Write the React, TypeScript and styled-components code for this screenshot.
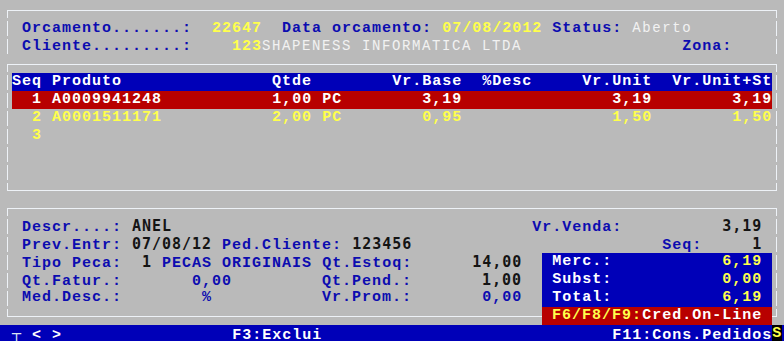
import React from 'react';
import styled, { createGlobalStyle, css } from 'styled-components';

type Tone = 'label' | 'hi' | 'white' | 'soft' | 'dark' | 'line';
type Item = [number, string, Tone];
type BoxSpec = { col: number; width: number; bg: string; items: Item[] };

const GRAY = '#bababa';
const BLUE = '#0000b8';
const RED = '#b80000';
const LINE = '#eef2f7';

const GlobalStyle = createGlobalStyle`
  html, body {
    margin: 0;
    background: ${GRAY};
  }
`;

const Screen = styled.div`
  position: relative;
  width: 784px;
  height: 341px;
  overflow: hidden;
  box-sizing: border-box;
  padding: 1px 0 0 2px;
  background: ${GRAY};
  font-family: 'Liberation Mono', monospace;
  font-size: 15px;
  font-weight: bold;
  letter-spacing: 1px;
  line-height: 18px;
`;

// moldura desenhada com caracteres de caixa: linha no meio da linha de texto
const Frame = styled.div<{ $closed?: boolean }>`
  position: relative;
  width: 780px;

  &::before,
  &::after {
    content: '';
    position: absolute;
    top: 9px;
    left: 5px;
    right: 5px;
    bottom: ${(p) => (p.$closed ? '8px' : '0')};
  }

  &::before {
    border-top: 1px solid ${LINE};
    border-bottom: ${(p) => (p.$closed ? `1px solid ${LINE}` : 'none')};
  }

  &::after {
    background-image: repeating-linear-gradient(
        to bottom,
        ${LINE} 0 8px,
        transparent 8px 11px,
        ${LINE} 11px 18px
      ),
      repeating-linear-gradient(
        to bottom,
        ${LINE} 0 8px,
        transparent 8px 11px,
        ${LINE} 11px 18px
      );
    background-size: 1px 100%;
    background-position: left top, right top;
    background-repeat: no-repeat;
  }
`;

const Row = styled.div`
  position: relative;
  height: 18px;
  white-space: pre;
`;

const StatusBar = styled(Row)`
  width: 784px;
  margin-left: -2px;
  padding-left: 2px;
  box-sizing: border-box;
  background: ${BLUE};
`;

const Block = styled.span<{ $bg: string; $cols: number }>`
  display: inline-block;
  vertical-align: top;
  height: 18px;
  width: ${(p) => p.$cols * 10}px;
  background: ${(p) => p.$bg};
`;

const tones = {
  label: css`
    color: #0c0cb0;
  `,
  hi: css`
    color: #ffff4c;
  `,
  white: css`
    color: #ffffff;
  `,
  soft: css`
    color: #f2f2f2;
    font-weight: normal;
    font-size: 14px;
    letter-spacing: 1.6px;
  `,
  dark: css`
    color: #141414;
    font-family: 'DejaVu Sans Mono', monospace;
    letter-spacing: 0.97px;
  `,
  line: css`
    color: #dce6f2;
    font-family: 'DejaVu Sans Mono', monospace;
    font-weight: normal;
    letter-spacing: 0.97px;
  `,
};

const Txt = styled.span<{ $tone: Tone }>`
  ${(p) => tones[p.$tone]}
`;

const Line = ({ items, from = 0 }: { items: Item[]; from?: number }) => {
  let cur = from;
  const out: React.ReactNode[] = [];
  items.forEach(([col, text, tone], i) => {
    if (col > cur) out.push(' '.repeat(col - cur));
    out.push(
      <Txt key={i} $tone={tone}>
        {text}
      </Txt>
    );
    cur = col + text.length;
  });
  return <>{out}</>;
};

const TermRow = ({ items = [], box }: { items?: Item[]; box?: BoxSpec }) => {
  const end = items.reduce((m, [c, t]) => Math.max(m, c + t.length), 0);
  return (
    <Row>
      <Line items={items} />
      {box && (
        <>
          {box.col > end ? ' '.repeat(box.col - end) : null}
          <Block $bg={box.bg} $cols={box.width}>
            <Line items={box.items} from={box.col} />
          </Block>
        </>
      )}
    </Row>
  );
};

const header: Item[] = [
  [2, 'Orcamento.......:', 'label'],
  [21, '22647', 'hi'],
  [28, 'Data orcamento:', 'label'],
  [44, '07/08/2012', 'hi'],
  [55, 'Status:', 'label'],
  [63, 'Aberto', 'soft'],
];

const client: Item[] = [
  [2, 'Cliente.........:', 'label'],
  [23, '123', 'hi'],
  [26, 'SHAPENESS INFORMATICA LTDA', 'soft'],
  [68, 'Zona:', 'label'],
];

const columns: Item[] = [
  [1, 'Seq', 'white'],
  [5, 'Produto', 'white'],
  [27, 'Qtde', 'white'],
  [39, 'Vr.Base', 'white'],
  [48, '%Desc', 'white'],
  [58, 'Vr.Unit', 'white'],
  [67, 'Vr.Unit+St', 'white'],
];

const items = [
  { seq: '1', cod: 'A0009941248', qt: '1,00', base: '3,19', unit: '3,19', st: '3,19' },
  { seq: '2', cod: 'A0001511171', qt: '2,00', base: '0,95', unit: '1,50', st: '1,50' },
];

const itemLine = (it: (typeof items)[number], tone: Tone): Item[] => [
  [3, it.seq, tone],
  [5, it.cod, tone],
  [27, it.qt, tone],
  [32, 'PC', tone],
  [42, it.base, tone],
  [61, it.unit, tone],
  [73, it.st, tone],
];

const totalsBox = (label: string, value: string): BoxSpec => ({
  col: 54,
  width: 23,
  bg: BLUE,
  items: [
    [55, label, 'white'],
    [72, value, 'hi'],
  ],
});

const App = () => (
  <>
    <GlobalStyle />
    <Screen>
      <Frame>
        <Row />
        <TermRow items={header} />
        <TermRow items={client} />
      </Frame>

      <Frame $closed>
        <Row />
        <TermRow box={{ col: 1, width: 76, bg: BLUE, items: columns }} />
        <TermRow box={{ col: 1, width: 76, bg: RED, items: itemLine(items[0], 'white') }} />
        <TermRow items={itemLine(items[1], 'hi')} />
        <TermRow items={[[3, '3', 'hi']]} />
        <Row />
        <Row />
        <Row />
      </Frame>

      <Frame $closed>
        <Row />
        <TermRow
          items={[
            [2, 'Descr....:', 'label'],
            [13, 'ANEL', 'dark'],
            [53, 'Vr.Venda:', 'label'],
            [72, '3,19', 'dark'],
          ]}
        />
        <TermRow
          items={[
            [2, 'Prev.Entr:', 'label'],
            [13, '07/08/12', 'dark'],
            [22, 'Ped.Cliente:', 'label'],
            [35, '123456', 'dark'],
            [66, 'Seq:', 'label'],
            [75, '1', 'dark'],
          ]}
        />
        <TermRow
          items={[
            [2, 'Tipo Peca:', 'label'],
            [14, '1', 'dark'],
            [16, 'PECAS ORIGINAIS', 'label'],
            [32, 'Qt.Estoq:', 'label'],
            [47, '14,00', 'dark'],
          ]}
          box={totalsBox('Merc.:', '6,19')}
        />
        <TermRow
          items={[
            [2, 'Qt.Fatur.:', 'label'],
            [19, '0,00', 'label'],
            [32, 'Qt.Pend.:', 'label'],
            [48, '1,00', 'dark'],
          ]}
          box={totalsBox('Subst:', '0,00')}
        />
        <TermRow
          items={[
            [2, 'Med.Desc.:', 'label'],
            [20, '%', 'label'],
            [32, 'Vr.Prom.:', 'label'],
            [48, '0,00', 'label'],
          ]}
          box={totalsBox('Total:', '6,19')}
        />
        <TermRow
          box={{
            col: 54,
            width: 23,
            bg: RED,
            items: [
              [55, 'F6/F8/F9:', 'hi'],
              [64, 'Cred.On-Line', 'white'],
            ],
          }}
        />
      </Frame>

      <StatusBar>
        <Line
          items={[
            [1, '┬', 'line'],
            [3, '<', 'white'],
            [5, '>', 'white'],
            [23, 'F3:Exclui', 'white'],
            [61, 'F11:Cons.Pedidos', 'white'],
          ]}
        />
        <Block $bg="#000000" $cols={1}>
          <Line items={[[77, 'S', 'hi']]} from={77} />
        </Block>
      </StatusBar>
    </Screen>
  </>
);

export default App;
